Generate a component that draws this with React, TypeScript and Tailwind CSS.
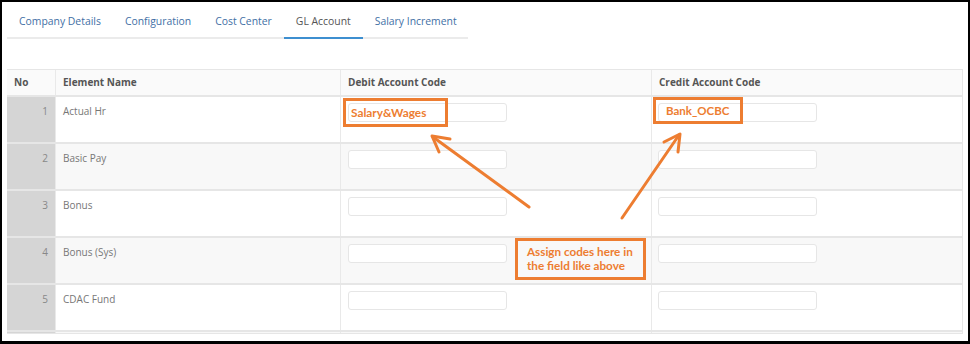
const tabs = ['Company Details', 'Configuration', 'Cost Center', 'GL Account', 'Salary Increment'];

const rows = [
  { no: '1', name: 'Actual Hr' },
  { no: '2', name: 'Basic Pay' },
  { no: '3', name: 'Bonus' },
  { no: '4', name: 'Bonus (Sys)' },
  { no: '5', name: 'CDAC Fund' },
  { no: '', name: '' },
];

const cols = 'grid grid-cols-[49px_285px_311px_311px]';

function CodeInput() {
  return <div className="h-[19px] w-[159px] rounded-[3px] border border-[#e6e6e6] bg-white" />;
}

export default function App() {
  return (
    <div className="h-[344px] w-[970px] overflow-hidden border-t-2 border-r-2 border-l-2 border-b-[3px] border-black bg-white font-['Open_Sans',sans-serif]">
      <div className="relative h-full w-full">
        {/* Tabs */}
        <div className="ml-[5px] flex w-[461px] border-b-2 border-[#ebebeb] text-[10.4px]">
          {tabs.map((t) => (
            <div
              key={t}
              className={
                t === 'GL Account'
                  ? 'relative shrink-0 px-3 pt-[10px] pb-[7px] leading-[18px] whitespace-nowrap text-[#555]'
                  : 'shrink-0 px-3 pt-[10px] pb-[7px] leading-[18px] whitespace-nowrap text-[#3f6fa5]'
              }
            >
              {t}
              {t === 'GL Account' && (
                <div className="absolute right-0 -bottom-[2px] left-0 h-[2px] bg-[#3d8fd0]" />
              )}
            </div>
          ))}
        </div>

        {/* Table */}
        <div className="mt-[30px] ml-[5px] h-[265px] w-[956px] overflow-hidden border-t border-r border-b border-[#e6e6e6] text-[10px]">
          <div className={`${cols} h-[27px] border-b-2 border-[#e6e6e6] bg-[#fafafa] font-bold text-[#555]`}>
            <div className="flex items-center border-r border-[#e9e9e9] pl-[7px]">No</div>
            <div className="flex items-center border-r border-[#e9e9e9] pl-[7px]">Element Name</div>
            <div className="flex items-center border-r border-[#e9e9e9] pl-[7px]">Debit Account Code</div>
            <div className="flex items-center pl-[7px]">Credit Account Code</div>
          </div>
          {rows.map((r, i) => (
            <div
              key={i}
              className={`${cols} h-[47px] border-b-2 border-[#e6e6e6] ${i % 2 === 1 ? 'bg-[#f8f8f8]' : 'bg-white'}`}
            >
              <div className="border-r border-[#e9e9e9] bg-[#d5d5d5] pt-[7px] pr-[7px] text-right leading-[15px] text-[#888]">
                {r.no}
              </div>
              <div className="border-r border-[#e9e9e9] pt-[7px] pl-[7px] leading-[15px] text-[#777]">{r.name}</div>
              <div className="border-r border-[#e9e9e9] pt-[6px] pl-[7px]">
                <CodeInput />
              </div>
              <div className="pt-[6px] pl-[6px]">
                <CodeInput />
              </div>
            </div>
          ))}
        </div>

        {/* Annotations */}
        <div className="absolute top-[96px] left-[341px] flex h-[29px] w-[105px] items-center border-[3px] border-[#ED7D31] pl-[5px] font-['Lato',sans-serif] text-[11.8px] font-bold text-[#ED7D31]">
          Salary&amp;Wages
        </div>
        <div className="absolute top-[95px] left-[651px] flex h-[27px] w-[90px] items-center border-[3px] border-[#ED7D31] pl-[10px] font-['Lato',sans-serif] text-[11.5px] font-bold text-[#ED7D31]">
          Bank_OCBC
        </div>
        <div className="absolute top-[236px] left-[513px] h-[42px] w-[131px] border-[3px] border-[#ED7D31] bg-[#f8f8f8] pt-[3px] pl-[9px] font-['Lato',sans-serif] text-[11.7px] leading-[14px] font-bold text-[#ED7D31]">
          Assign codes here in
          <br />
          the field like above
        </div>
        <svg className="absolute -top-[2px] -left-[2px]" width={970} height={344} fill="none" stroke="#ED7D31" strokeWidth={3} strokeLinecap="round" strokeLinejoin="round">
          <line x1={529} y1={207} x2={433} y2={137} />
          <polyline points="450,139 432,136 439,152" />
          <line x1={622} y1={218} x2={679} y2={135} />
          <polyline points="664,142 680,134 678,152" />
        </svg>
      </div>
    </div>
  );
}
